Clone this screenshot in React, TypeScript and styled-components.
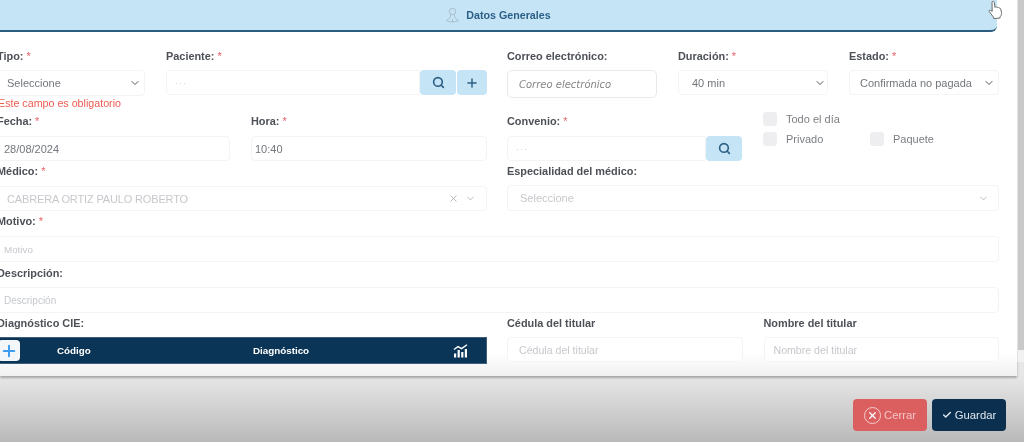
import React from "react"
import styled, { createGlobalStyle } from "styled-components"
import { Check, ChevronDown, Plus, Search, X } from "lucide-react"

const GlobalStyle = createGlobalStyle`
  html, body {
    margin: 0;
    padding: 0;
    background: #c4c4c4;
    font-family: "Liberation Sans", Arial, sans-serif;
  }
`
const Screen = styled.div`
  position: relative;
  width: 1024px;
  height: 442px;
  overflow: hidden;
  display: flex;
  flex-direction: column;
  background: linear-gradient(to bottom, #ececec 0, #e6e6e6 378px, #b9b9b9 442px);
  filter: blur(0.45px);
`
const Top = styled.div`
  display: flex;
  height: 376px;
  flex: none;
`
const Panel = styled.div`
  width: 1017px;
  height: 376px;
  flex: none;
  background: linear-gradient(to bottom, #fff 0, #fff 352px, #f1f1f1 376px);
  box-shadow: 0 2px 2px rgba(90, 90, 90, 0.45);
`
const ScrollTrack = styled.div`
  flex: 1;
  height: 362px;
  background: #f1f1f1;
  border-left: 1px solid #e2e2e2;
  display: flex;
`
const ScrollThumb = styled.div`
  flex: 1;
  height: 350px;
  background: #c9c9c9;
`
const SectionHeader = styled.div`
  width: 997px;
  height: 32px;
  box-sizing: border-box;
  background: #c5e4f6;
  border-bottom: 2px solid #2c5c7e;
  border-bottom-right-radius: 6px;
  display: flex;
  align-items: center;
  justify-content: center;
  gap: 6px;
  padding-right: 1px;
  font-size: 10.7px;
  font-weight: 700;
  color: #2c5f85;
`
const Form = styled.div`
  width: 1002px;
  margin-left: -3px;
  padding-top: 16px;
  display: flex;
  flex-direction: column;
  gap: 2px;
`
const Row = styled.div<{ $top?: number }>`
  display: flex;
  gap: 20px;
  margin-top: ${p => p.$top ?? 0}px;
`
const Half = styled.div<{ $w: number }>`
  width: ${p => p.$w}px;
  flex: none;
  display: flex;
  gap: 21px;
`
const Field = styled.div<{ $w?: number }>`
  display: flex;
  flex-direction: column;
  width: ${p => (p.$w ? `${p.$w}px` : "auto")};
  flex: ${p => (p.$w ? "none" : 1)};
  min-width: 0;
`
const Label = styled.div<{ $gap?: number }>`
  height: 16px;
  line-height: 16px;
  margin-bottom: ${p => p.$gap ?? 7}px;
  font-size: 10.9px;
  font-weight: 700;
  color: #4d5157;
  white-space: nowrap;
`
const Req = styled.span`
  color: #e8636b;
  margin-left: 3px;
  font-weight: 400;
`
const Input = styled.div<{ $h?: number; $muted?: boolean; $pad?: number; $padR?: number; $fs?: number }>`
  height: ${p => p.$h ?? 25}px;
  box-sizing: border-box;
  border: 1px solid #f4f4f6;
  border-radius: 4px;
  background: #fff;
  padding: 0 ${p => p.$padR ?? p.$pad ?? 13}px 0 ${p => p.$pad ?? 13}px;
  display: flex;
  align-items: center;
  justify-content: space-between;
  font-size: ${p => p.$fs ?? 11}px;
  color: ${p => (p.$muted ? "#c6c8cc" : "#73777c")};
  white-space: nowrap;
`
const MailInput = styled(Input)`
  border-color: #e9e9ec;
  border-radius: 5px;
  font-family: "DejaVu Sans", sans-serif;
  font-style: italic;
  font-size: 10px;
  color: #858585;
  padding: 0 11px;
`
const Group = styled.div`
  display: flex;
  height: 25px;
  gap: 1px;
`
const GroupInput = styled(Input)`
  flex: 1;
  border-radius: 4px 0 0 4px;
  font-size: 9px;
  color: #d0d2d6;
  letter-spacing: 1px;
  margin-right: -1px;
`
const IconButton = styled.div<{ $w: number }>`
  width: ${p => p.$w}px;
  flex: none;
  background: #c5e4f6;
  border-radius: 4px;
  display: flex;
  align-items: center;
  justify-content: center;
  color: #2c5f85;
`
const ErrorText = styled.div`
  height: 15px;
  line-height: 14px;
  font-size: 10.7px;
  color: #ee5b52;
  padding-left: 1px;
`
const Checks = styled.div`
  flex: 1;
  display: grid;
  grid-template-columns: 107px 1fr;
  grid-auto-rows: 14px;
  row-gap: 6px;
  margin-top: -1px;
`
const CheckItem = styled.div<{ $full?: boolean }>`
  display: flex;
  align-items: center;
  gap: 9px;
  font-size: 11px;
  color: #7b7e83;
  grid-column: ${p => (p.$full ? "1 / -1" : "auto")};
`
const Box = styled.div`
  width: 14px;
  height: 14px;
  border-radius: 3px;
  background: #eeeef1;
`
const IconPair = styled.div`
  display: flex;
  align-items: center;
  gap: 6px;
  color: #b3b5b9;
`
const DoctorName = styled.span`
  letter-spacing: -0.15px;
`
const Table = styled.div`
  height: 27px;
  box-sizing: border-box;
  background: #0a3556;
  border: 1px solid #3d5f7b;
  display: flex;
  align-items: center;
  color: #fff;
  font-size: 9.8px;
  font-weight: 700;
`
const AddCell = styled.div`
  width: 22px;
  height: 21px;
  flex: none;
  box-sizing: border-box;
  background: #f4f7fa;
  border-radius: 4px;
  display: flex;
  align-items: center;
  justify-content: center;
  color: #3c9cf0;
`
const CodeCell = styled.div`
  width: 233px;
  flex: none;
  padding-left: 37px;
  box-sizing: border-box;
`
const DiagCell = styled.div`
  flex: 1;
`
const ChartCell = styled.div`
  width: 33px;
  flex: none;
  display: flex;
`
const Footer = styled.div`
  flex: 1;
  display: flex;
  justify-content: flex-end;
  align-items: flex-start;
  gap: 5px;
  padding: 23px 18px 0 0;
`
const FooterButton = styled.div<{ $bg: string; $w: number; $fg: string }>`
  width: ${p => p.$w}px;
  height: 32px;
  border-radius: 4px;
  background: ${p => p.$bg};
  color: ${p => p.$fg};
  display: flex;
  align-items: center;
  justify-content: center;
  gap: 3px;
  font-size: 11.3px;
`
const CloseIcon = styled.div`
  width: 17px;
  height: 17px;
  box-sizing: border-box;
  border: 1.5px solid #f3d0d0;
  border-radius: 50%;
  display: flex;
  align-items: center;
  justify-content: center;
  color: #fff;
`
const Cursor = styled.svg`
  position: absolute;
  left: 988px;
  top: 0;
`

function UserIcon() {
  return (
    <svg width="15" height="17" viewBox="0 0 15 17" fill="none" stroke="#a9bdc9" strokeWidth="1">
      <circle cx="7.5" cy="4.5" r="3.2" />
      <path d="M5.8 7.5c0 3-2 4.6-4.3 6 1.6 1 3.6 1.4 6 1.4s4.4-.4 6-1.4c-2.3-1.4-4.3-3-4.3-6" />
      <path d="M7.5 12v3" />
    </svg>
  )
}

function ChartIcon() {
  return (
    <svg width="15" height="14" viewBox="0 0 15 14" fill="#fff">
      <path d="M1 5.5 5 2.6l3.6 2L14 .8" fill="none" stroke="#fff" strokeWidth="1.4" />
      <rect x="1" y="9.5" width="2.2" height="4" />
      <rect x="4.6" y="6" width="2.2" height="7.5" />
      <rect x="8.2" y="8" width="2.2" height="5.5" />
      <rect x="11.8" y="5" width="2.2" height="8.5" />
    </svg>
  )
}

export default function App() {
  return (
    <>
      <GlobalStyle />
      <Screen>
        <Top>
          <Panel>
            <SectionHeader>
              <UserIcon />
              Datos Generales
            </SectionHeader>
            <Form>
              <Row>
                <Half $w={490}>
                  <Field $w={148}>
                    <Label $gap={6}>Tipo:<Req>*</Req></Label>
                    <Input $h={26} $pad={9} $padR={3}>
                      Seleccione
                      <ChevronDown size={12} color="#555" strokeWidth={2} />
                    </Input>
                  </Field>
                  <Field>
                    <Label $gap={6}>Paciente:<Req>*</Req></Label>
                    <Group>
                      <GroupInput $pad={8}>···</GroupInput>
                      <IconButton $w={36}><Search size={13} strokeWidth={3} /></IconButton>
                      <IconButton $w={30}><Plus size={14} strokeWidth={2.5} /></IconButton>
                    </Group>
                  </Field>
                </Half>
                <Half $w={492}>
                  <Field $w={150}>
                    <Label $gap={6}>Correo electrónico:</Label>
                    <MailInput $h={28}>Correo electrónico</MailInput>
                  </Field>
                  <Field $w={150}>
                    <Label $gap={6}>Duración:<Req>*</Req></Label>
                    <Input $h={25} $padR={1}>
                      40 min
                      <ChevronDown size={12} color="#555" strokeWidth={2} />
                    </Input>
                  </Field>
                  <Field $w={150}>
                    <Label $gap={6}>Estado:<Req>*</Req></Label>
                    <Input $h={25} $pad={10} $padR={3}>
                      Confirmada no pagada
                      <ChevronDown size={12} color="#555" strokeWidth={2} />
                    </Input>
                  </Field>
                </Half>
              </Row>
              <Row $top={-4}>
                <Half $w={490}>
                  <ErrorText>Este campo es obligatorio</ErrorText>
                </Half>
              </Row>
              <Row>
                <Half $w={490}>
                  <Field $w={233}>
                    <Label>Fecha:<Req>*</Req></Label>
                    <Input $pad={6}>28/08/2024</Input>
                  </Field>
                  <Field>
                    <Label>Hora:<Req>*</Req></Label>
                    <Input $pad={3}>10:40</Input>
                  </Field>
                </Half>
                <Half $w={492}>
                  <Field $w={235}>
                    <Label>Convenio:<Req>*</Req></Label>
                    <Group>
                      <GroupInput $pad={8}>···</GroupInput>
                      <IconButton $w={36}><Search size={13} strokeWidth={3} /></IconButton>
                    </Group>
                  </Field>
                  <Checks>
                    <CheckItem $full><Box />Todo el día</CheckItem>
                    <CheckItem><Box />Privado</CheckItem>
                    <CheckItem><Box />Paquete</CheckItem>
                  </Checks>
                </Half>
              </Row>
              <Row>
                <Half $w={490}>
                  <Field>
                    <Label>Médico:<Req>*</Req></Label>
                    <Input $muted $pad={9} $padR={10}>
                      <DoctorName>CABRERA ORTIZ PAULO ROBERTO</DoctorName>
                      <IconPair>
                        <X size={11} />
                        <ChevronDown size={11} />
                      </IconPair>
                    </Input>
                  </Field>
                </Half>
                <Half $w={492}>
                  <Field>
                    <Label $gap={6}>Especialidad del médico:</Label>
                    <Input $h={26} $muted $pad={12} $padR={9}>
                      Seleccione
                      <ChevronDown size={11} color="#b3b5b9" />
                    </Input>
                  </Field>
                </Half>
              </Row>
              <Field>
                <Label>Motivo:<Req>*</Req></Label>
                <Input $h={26} $muted $pad={6} $fs={9.8}>Motivo</Input>
              </Field>
              <Row $top={1}>
                <Field>
                  <Label $gap={6}>Descripción:</Label>
                  <Input $h={26} $muted $pad={6} $fs={10}>Descripción</Input>
                </Field>
              </Row>
              <Row>
                <Half $w={490}>
                  <Field>
                    <Label $gap={6}>Diagnóstico CIE:</Label>
                    <Table>
                      <AddCell><Plus size={18} strokeWidth={2.6} /></AddCell>
                      <CodeCell>Código</CodeCell>
                      <DiagCell>Diagnóstico</DiagCell>
                      <ChartCell><ChartIcon /></ChartCell>
                    </Table>
                  </Field>
                </Half>
                <Half $w={492}>
                  <Field>
                    <Label $gap={6}>Cédula del titular</Label>
                    <Input $muted $pad={11} $fs={10.6}>Cédula del titular</Input>
                  </Field>
                  <Field>
                    <Label $gap={6}>Nombre del titular</Label>
                    <Input $muted $pad={9} $fs={10.6}>Nombre del titular</Input>
                  </Field>
                </Half>
              </Row>
            </Form>
          </Panel>
          <ScrollTrack>
            <ScrollThumb />
          </ScrollTrack>
        </Top>
        <Footer>
          <FooterButton $bg="#dc5f5f" $w={74} $fg="#f3c4c4">
            <CloseIcon><X size={11} strokeWidth={3} /></CloseIcon>
            Cerrar
          </FooterButton>
          <FooterButton $bg="#0b2f4e" $w={74} $fg="#dfe6ec">
            <Check size={10} strokeWidth={3.5} />
            Guardar
          </FooterButton>
        </Footer>
        <Cursor width="16" height="20" viewBox="0 0 16 20" fill="#fff" stroke="#6a6a6a" strokeWidth="1">
          <path d="M4.5 1.5c.8-.5 1.7 0 1.8.9l.7 5 .3-.3c.7-.4 1.5-.2 1.9.4.7-.3 1.5-.1 1.9.6.8-.2 1.5.2 1.7 1l.7 3.5c.2 1.6-.3 3-1.3 4l-.2 1.4-6.2.6-.6-1.8-4-5.3c-.5-.8.5-1.7 1.3-1.2l1.7 1.1L4 2.8c-.1-.5.1-1 .5-1.3Z" />
        </Cursor>
      </Screen>
    </>
  )
}
